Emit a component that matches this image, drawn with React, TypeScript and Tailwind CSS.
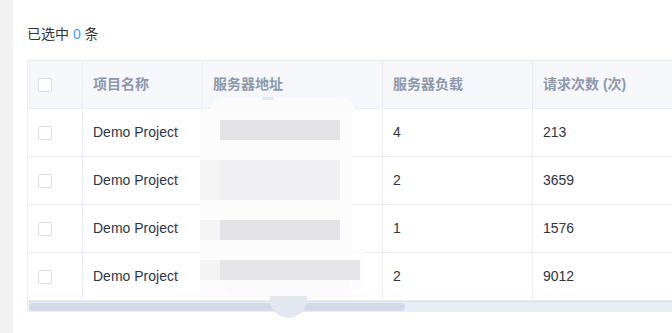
import React from "react";

const rows = [
  { load: "4", req: "213" },
  { load: "2", req: "3659" },
  { load: "1", req: "1576" },
  { load: "2", req: "9012" },
];

function Box() {
  return <div className="w-[14px] h-[14px] rounded-[2px] border border-[#dcdfe6] bg-white" />;
}

export default function App() {
  return (
    <div
      className="relative w-[672px] h-[333px] flex overflow-hidden bg-white"
      style={{ fontFamily: '"Liberation Sans", "Noto Sans CJK SC", sans-serif' }}
    >
      <div className="w-[13px] shrink-0 bg-[#f2f2f2]" />
      <div className="flex-1 min-w-0 pl-[14px] pt-[24px]">
        <div className="h-[20px] leading-[20px] text-[14px] text-[#333333]">
          已选中 <span className="text-[#409eff]">0</span> 条
        </div>
        <div className="mt-[16px] border-l border-t border-[#ebeef5] overflow-hidden">
          <div className="w-[800px]">
            <div className="flex h-[48px] bg-[#f5f7fa] border-b border-[#ebeef5] text-[14px] font-bold text-[#8e98aa]">
              <div className="w-[55px] shrink-0 border-r border-[#ebeef5] flex items-center pl-[10px]">
                <Box />
              </div>
              <div className="w-[120px] shrink-0 border-r border-[#ebeef5] flex items-center pl-[10px]">项目名称</div>
              <div className="w-[180px] shrink-0 border-r border-[#ebeef5] flex items-center pl-[10px]">服务器地址</div>
              <div className="w-[150px] shrink-0 border-r border-[#ebeef5] flex items-center pl-[10px]">服务器负载</div>
              <div className="w-[200px] shrink-0 border-r border-[#ebeef5] flex items-center pl-[10px]">请求次数 (次)</div>
            </div>
            {rows.map((r, i) => (
              <div key={i} className="flex h-[48px] border-b border-[#ebeef5] text-[14px] text-[#2f3443]">
                <div className="w-[55px] shrink-0 border-r border-[#ebeef5] flex items-center pl-[10px]">
                  <Box />
                </div>
                <div className="w-[120px] shrink-0 border-r border-[#ebeef5] flex items-center pl-[10px]">Demo Project</div>
                <div className="w-[180px] shrink-0 border-r border-[#ebeef5]" />
                <div className="w-[150px] shrink-0 border-r border-[#ebeef5] flex items-center pl-[10px]">{r.load}</div>
                <div className="w-[200px] shrink-0 border-r border-[#ebeef5] flex items-center pl-[10px]">{r.req}</div>
              </div>
            ))}
          </div>
          <div className="h-[11px] bg-[#e9eef6] border-t border-[#d6e0ef] pt-[1px] pl-[1px]">
            <div className="w-[376px] h-[8px] rounded-full bg-[#d3dae6]" />
          </div>
        </div>
      </div>
      {/* blurred redaction overlay */}
      <div className="absolute left-[210px] top-[98px] w-[145px] h-[14px] rounded-t-[14px] bg-[#fbfbfc]" />
      <div className="absolute left-[262px] top-[97px] w-[12px] h-[3px] rounded-full bg-[#e3e6ea]" />
      <div className="absolute left-[200px] top-[110px] w-[152px] h-[190px] bg-[#fcfcfc]" />
      <div className="absolute left-[352px] top-[250px] w-[10px] h-[40px] bg-[#fcfcfc]" />
      <div className="absolute left-[220px] top-[120px] w-[120px] h-[20px] bg-[#e3e3e6]" />
      <div className="absolute left-[200px] top-[160px] w-[20px] h-[40px] bg-[#f5f5f6]" />
      <div className="absolute left-[220px] top-[160px] w-[120px] h-[40px] bg-[#efeff1]" />
      <div className="absolute left-[200px] top-[220px] w-[20px] h-[20px] bg-[#f5f5f6]" />
      <div className="absolute left-[220px] top-[220px] w-[120px] h-[20px] bg-[#e3e3e7]" />
      <div className="absolute left-[200px] top-[260px] w-[20px] h-[20px] bg-[#f3f3f4]" />
      <div className="absolute left-[220px] top-[260px] w-[140px] h-[20px] bg-[#e5e5e8]" />
      <div className="absolute left-[220px] top-[280px] w-[130px] h-[18px] rounded-b-[20px] bg-[#fafafa]" />
      <div className="absolute left-[270px] top-[296px] w-[37px] h-[22px] rounded-b-full bg-[#e3e8f0]" />
    </div>
  );
}
